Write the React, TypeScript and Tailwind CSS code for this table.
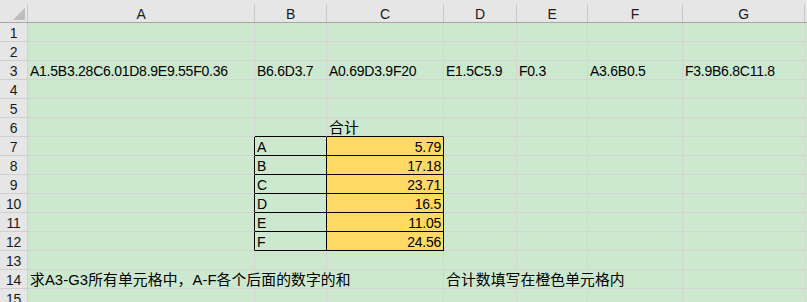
import React from "react";

const COLS = ["A", "B", "C", "D", "E", "F", "G", ""];

const ROW3 = [
  "A1.5B3.28C6.01D8.9E9.55F0.36",
  "B6.6D3.7",
  "A0.69D3.9F20",
  "E1.5C5.9",
  "F0.3",
  "A3.6B0.5",
  "F3.9B6.8C11.8",
];

const TOTALS: [string, string][] = [
  ["A", "5.79"],
  ["B", "17.18"],
  ["C", "23.71"],
  ["D", "16.5"],
  ["E", "11.05"],
  ["F", "24.56"],
];

const latin = "font-['Liberation_Sans',sans-serif] text-[14px] tracking-[-0.25px]";
const cjk = "font-['Liberation_Sans','Noto_Sans_CJK_SC',sans-serif] text-[14.8px] tracking-[0.1px]";

function CornerCell() {
  return (
    <div className="bg-[#e6e6e6] border-b border-[#a6a6a6] pt-[4px]">
      <div className="h-full border-r border-[#c8c8c8] flex items-end justify-end pr-[2px] pb-[2px]">
        <svg width="12" height="12" viewBox="0 0 12 12">
          <polygon points="12,0 12,12 0,12" fill="#bdbdbd" />
        </svg>
      </div>
    </div>
  );
}

function ColHeader({ label, last }: { label: string; last: boolean }) {
  return (
    <div className="bg-[#e6e6e6] border-b border-[#a6a6a6] pt-[4px] flex">
      <div
        className={`flex-1 flex items-end justify-center leading-[16px] text-[#1a1a1a] ${latin} ${
          last ? "" : "border-r border-[#c8c8c8]"
        }`}
      >
        {label}
      </div>
    </div>
  );
}

function RowHeader({ n }: { n: number }) {
  return (
    <div
      className={`bg-[#e6e6e6] border-r border-b border-[#d0d0d0] flex items-end justify-center leading-[16px] text-[#1a1a1a] ${latin}`}
    >
      {n}
    </div>
  );
}

function Cell({
  children,
  right,
  fill,
  blackRight,
  blackBottom,
  wide,
  span,
}: {
  children?: React.ReactNode;
  right?: boolean;
  fill?: boolean;
  blackRight?: boolean;
  blackBottom?: boolean;
  wide?: boolean;
  span?: boolean;
}) {
  return (
    <div
      className={[
        "flex items-end px-[2px] leading-[16px] whitespace-nowrap overflow-hidden text-black",
        "border-r border-b",
        blackRight ? "border-r-black" : "border-r-[#d4d4d4]",
        blackBottom ? "border-b-black" : "border-b-[#d4d4d4]",
        fill ? "bg-[#ffd966]" : "bg-[#cce8cf]",
        right ? "justify-end" : "justify-start",
        wide ? cjk : latin,
        span ? "col-span-3" : "",
      ].join(" ")}
    >
      {children}
    </div>
  );
}

function SheetRow({ r }: { r: number }) {
  if (r === 14) {
    return (
      <>
        <RowHeader n={r} />
        <Cell wide span>
          求A3-G3所有单元格中，A-F各个后面的数字的和
        </Cell>
        <Cell wide span>
          合计数填写在橙色单元格内
        </Cell>
        <Cell />
        <Cell />
      </>
    );
  }
  const inTable = r >= 7 && r <= 12;
  return (
    <>
      <RowHeader n={r} />
      {COLS.map((_, c) => {
        let content: React.ReactNode = null;
        let right = false;
        let wide = false;
        if (r === 3 && c < 7) content = ROW3[c];
        if (r === 6 && c === 2) {
          content = "合计";
          wide = true;
        }
        if (inTable && c === 1) content = TOTALS[r - 7][0];
        if (inTable && c === 2) {
          content = TOTALS[r - 7][1];
          right = true;
        }
        return (
          <Cell
            key={c}
            right={right}
            wide={wide}
            fill={inTable && c === 2}
            blackRight={inTable && c <= 2}
            blackBottom={(inTable || r === 6) && (c === 1 || c === 2)}
          >
            {content}
          </Cell>
        );
      })}
    </>
  );
}

export default function App() {
  const rows = Array.from({ length: 15 }, (_, i) => i + 1);
  return (
    <div className="w-[807px] h-[302px] overflow-hidden bg-[#cce8cf]">
      <div className="grid grid-cols-[28px_227px_72px_117px_73px_71px_95px_122px_1fr] grid-rows-[23px_repeat(15,19px)]">
        <CornerCell />
        {COLS.map((c, i) => (
          <ColHeader key={i} label={c} last={i === COLS.length - 1} />
        ))}
        {rows.map((r) => (
          <SheetRow key={r} r={r} />
        ))}
      </div>
    </div>
  );
}
